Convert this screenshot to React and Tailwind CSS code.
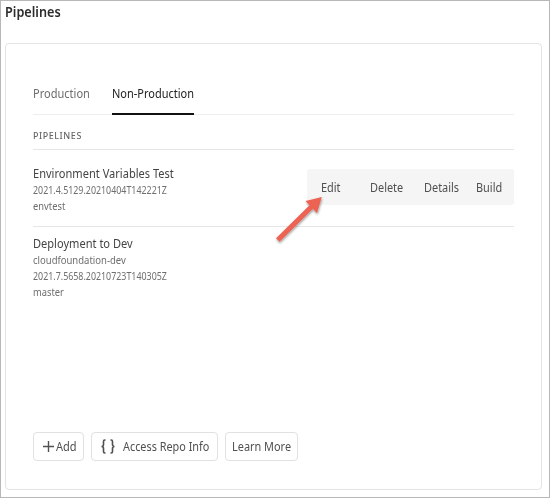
function Tabs() {
  return (
    <div className="flex h-[31px] gap-[22px] border-b border-[#eeeeee]">
      <div className="w-[57px] leading-[20px] text-[#6e6e6e]">
        <span className="inline-block origin-left scale-x-[.92]">Production</span>
      </div>
      <div className="h-[31px] w-[82px] border-b-2 border-[#111111] leading-[20px] text-[#222222]">
        <span className="inline-block origin-left scale-x-[.915]">Non-Production</span>
      </div>
    </div>
  );
}

function Pipeline({ name, version, repo, branch }) {
  return (
    <div className="w-[200px] text-[#6e6e6e]">
      <div className="h-[18px] origin-left scale-x-[.885] text-[12.5px] leading-[19px] text-[#444444]">{name}</div>
      {repo && <div className="h-[16px] origin-left scale-x-[.905] text-[10.5px] leading-[17px]">{repo}</div>}
      <div className="h-[16px] origin-left scale-x-[.845] text-[10.5px] leading-[17px]">{version}</div>
      <div className="h-[16px] origin-left scale-x-[.89] text-[10.5px] leading-[17px]">{branch}</div>
    </div>
  );
}

function Action({ children }) {
  return <span className="inline-block origin-left scale-x-[.91]">{children}</span>;
}

function Arrow() {
  return (
    <svg className="absolute left-[269px] top-[189px]" width="60" height="60" viewBox="270 190 60 60">
      <defs>
        <filter id="shade" x="-20%" y="-20%" width="150%" height="150%">
          <feDropShadow dx="0.5" dy="1.5" stdDeviation="1" floodColor="#000" floodOpacity="0.4" />
        </filter>
      </defs>
      <path d="M321.8 197L305.5 201L309.5 205.2L276 238.2L279.5 241.8L313 208.8L317 213.3Z" fill="#ec6353" filter="url(#shade)" />
    </svg>
  );
}

export default function App() {
  return (
    <div className="relative flex h-[498px] w-[550px] flex-col overflow-hidden border border-[#b8b8b8] bg-white font-['Noto_Sans','Open_Sans',sans-serif] text-[12px] whitespace-nowrap">
      <h1 className="ml-[4px] h-[42px] origin-left scale-x-[.905] pt-px text-[14px] leading-[20px] font-semibold text-[#2c2c2c]">Pipelines</h1>
      <main className="ml-[4px] flex h-[447px] w-[537px] flex-col rounded-[4px] border border-[#e4e4e4] pt-[40px] pr-[27px] pl-[27px]">
        <Tabs />
        <div className="h-[35px] border-b border-[#e6e6e6] pt-[12px] text-[9.5px] leading-[17px] font-medium tracking-[0.6px] text-[#666666]">
          <span className="inline-block origin-left scale-x-[.94]">PIPELINES</span>
        </div>
        <section className="flex h-[77px] justify-between border-b border-[#e6e6e6] pt-[14px]">
          <Pipeline name="Environment Variables Test" version="2021.4.5129.20210404T142221Z" branch="envtest" />
          <div className="mt-[5px] flex h-[36px] w-[207px] items-center rounded-[3px] bg-[#f5f5f5] pt-px pl-[14px] text-[#505050]">
            <div className="w-[49px]"><Action>Edit</Action></div>
            <div className="w-[54px]"><Action>Delete</Action></div>
            <div className="w-[52px]"><Action>Details</Action></div>
            <Action>Build</Action>
          </div>
        </section>
        <section className="h-[205px] pt-[7px]">
          <Pipeline name="Deployment to Dev" repo="cloudfoundation-dev" version="2021.7.5658.20210723T140305Z" branch="master" />
        </section>
        <div className="flex gap-[7px] text-[#505050]">
          <button className="flex h-[29px] w-[51px] items-center rounded-[4px] border border-[#e1e1e1] pl-[9px]">
            <svg className="shrink-0" width="11" height="11" viewBox="0 0 11 11" stroke="#505050" strokeWidth="1.4"><path d="M5.5 0V11M0 5.5H11" /></svg>
            <span className="ml-[2px] origin-left scale-x-[.92] pt-px">Add</span>
          </button>
          <button className="flex h-[29px] w-[127px] items-center rounded-[4px] border border-[#e1e1e1] pl-[9px]">
            <svg className="shrink-0" width="14" height="15" viewBox="0 0 14 15" fill="none" stroke="#505050" strokeWidth="1.6"><path d="M4.5 1H3.8Q2.5 1 2.5 2.5V5.5Q2.5 7.5 .5 7.5Q2.5 7.5 2.5 9.5V12.5Q2.5 14 3.8 14H4.5M9.5 1H10.2Q11.5 1 11.5 2.5V5.5Q11.5 7.5 13.5 7.5Q11.5 7.5 11.5 9.5V12.5Q11.5 14 10.2 14H9.5" /></svg>
            <span className="ml-[8px] origin-left scale-x-[.905] pt-px">Access Repo Info</span>
          </button>
          <button className="flex h-[29px] w-[73px] items-center rounded-[4px] border border-[#e1e1e1] pt-px pl-[6px]">
            <span className="origin-left scale-x-[.91]">Learn More</span>
          </button>
        </div>
      </main>
      <Arrow />
    </div>
  );
}
